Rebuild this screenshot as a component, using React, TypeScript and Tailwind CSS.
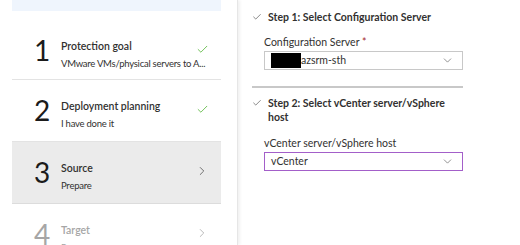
import { Check, ChevronRight, ChevronDown } from 'lucide-react';

const font = { fontFamily: 'Lato, "Open Sans", sans-serif' };

type Step = {
  num: string;
  title: string;
  sub: string;
  state: 'done' | 'active' | 'todo';
};

const steps: Step[] = [
  { num: '1', title: 'Protection goal', sub: 'VMware VMs/physical servers to A...', state: 'done' },
  { num: '2', title: 'Deployment planning', sub: 'I have done it', state: 'done' },
  { num: '3', title: 'Source', sub: 'Prepare', state: 'active' },
  { num: '4', title: 'Target', sub: 'Prepare', state: 'todo' },
];

const StepRow = ({ step, first }: { step: Step; first: boolean }) => {
  const muted = step.state === 'todo';
  const text = muted ? 'text-[#a6a6a6]' : 'text-[#323130]';
  return (
    <div
      className={`flex items-start pl-[22px] pr-[12px] border-b ${first ? 'h-[69px] pt-[25px]' : 'h-[62px] pt-[16px]'} ${
        step.state === 'active' ? 'bg-[#ebebeb] border-[#dcdcdc]' : 'border-[#e3e3e3]'
      }`}
    >
      <div className={`w-[27px] text-[28px] leading-[28px] ${muted ? 'text-[#a6a6a6]' : 'text-[#1b1b1b]'}`}>{step.num}</div>
      <div className="flex-1 min-w-0 mt-[3px]">
        <div className={`text-[10.5px] font-semibold leading-[14px] ${text}`}>{step.title}</div>
        <div className={`text-[9.5px] tracking-[-0.25px] leading-[14px] mt-[4px] whitespace-nowrap ${text}`}>{step.sub}</div>
      </div>
      <div className="w-[16px] flex justify-end">
        {step.state === 'done' && <Check className="w-[13px] h-[13px] mt-[7px] text-[#5fb843]" strokeWidth={1.6} />}
        {step.state === 'active' && <ChevronRight className="w-[14px] h-[14px] mt-[6px] text-[#555]" strokeWidth={1.4} />}
        {step.state === 'todo' && <ChevronRight className="w-[14px] h-[14px] mt-[6px] text-[#aaa]" strokeWidth={1.4} />}
      </div>
    </div>
  );
};

export default function App() {
  return (
    <div className="flex w-[520px] h-[245px] bg-white overflow-hidden" style={font}>
      <div className="w-[238px] shrink-0 pl-[12px] pr-[16px] border-r border-[#e6e6e6] shadow-[2px_0_3px_rgba(0,0,0,0.06)]">
        <div className="h-[11px] bg-[#eff5fd]" />
        {steps.map((s, i) => (
          <StepRow key={s.num} step={s} first={i === 0} />
        ))}
      </div>

      <div className="flex-1 pl-[14px] pt-[10px]">
        <div className="w-[211px]">
          <div className="flex items-center gap-[6px] text-[10.5px] font-bold text-[#323130] leading-[14px]">
            <Check className="w-[10px] h-[10px] text-[#444]" strokeWidth={1.5} />
            Step 1: Select Configuration Server
          </div>
          <div className="pl-[12px] mt-[11px]">
            <div className="text-[10.5px] text-[#323130] leading-[14px]">
              Configuration Server <span className="text-[#a4262c]">*</span>
            </div>
            <div className="mt-[2px] h-[19px] border border-[#c8c8c8] flex items-center pl-[6px] pr-[8px]">
              <div className="w-[30px] h-[15px] bg-black" />
              <span className="text-[10.5px] text-[#323130] flex-1">azsrm-sth</span>
              <ChevronDown className="w-[13px] h-[13px] text-[#666]" strokeWidth={1.3} />
            </div>
          </div>
          <div className="mt-[16px] h-[2px] bg-[#c8c8c8]" />
          <div className="mt-[8px] flex items-start gap-[6px] text-[10.5px] font-bold text-[#323130] leading-[14px]">
            <Check className="w-[10px] h-[10px] mt-[2px] shrink-0 text-[#444]" strokeWidth={1.5} />
            <span className="w-[185px]">Step 2: Select vCenter server/vSphere host</span>
          </div>
          <div className="pl-[12px] mt-[12px]">
            <div className="text-[10.5px] text-[#323130] leading-[14px]">vCenter server/vSphere host</div>
            <div className="mt-[2px] h-[19px] border border-[#a35fc9] flex items-center pl-[6px] pr-[8px]">
              <span className="text-[10.5px] text-[#323130] flex-1">vCenter</span>
              <ChevronDown className="w-[13px] h-[13px] text-[#666]" strokeWidth={1.3} />
            </div>
          </div>
        </div>
      </div>
    </div>
  );
}
